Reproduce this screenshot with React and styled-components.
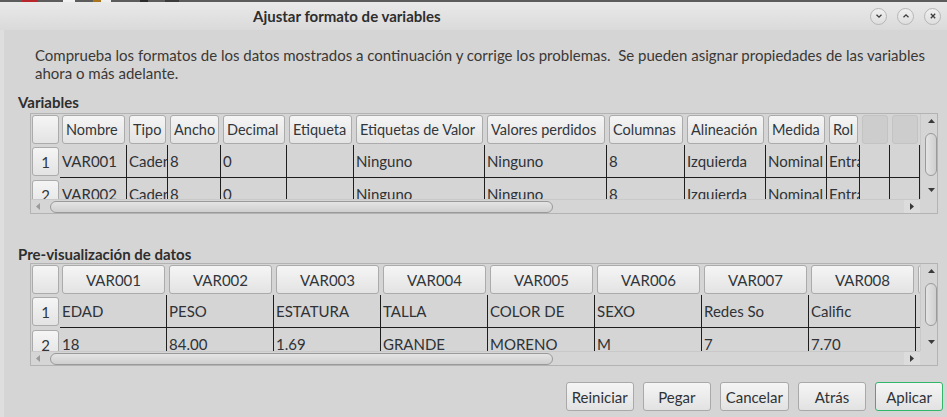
import React from 'react'
import styled, { createGlobalStyle } from 'styled-components'

const GlobalStyle = createGlobalStyle`
  html, body {
    margin: 0;
    padding: 0;
    background: #d5d5d5;
  }
  body {
    width: 947px;
    height: 417px;
    overflow: hidden;
    font-family: Lato, "Noto Sans", sans-serif;
    font-size: 15px;
    color: #3a3a3a;
  }
`

const varCols = [
  { label: 'Nombre', w: 67 },
  { label: 'Tipo', w: 41 },
  { label: 'Ancho', w: 53 },
  { label: 'Decimal', w: 66 },
  { label: 'Etiqueta', w: 67 },
  { label: 'Etiquetas de Valor', w: 131 },
  { label: 'Valores perdidos', w: 122 },
  { label: 'Columnas', w: 78 },
  { label: 'Alineación', w: 81 },
  { label: 'Medida', w: 61 },
  { label: 'Rol', w: 33 },
  { label: '', w: 30, off: true },
  { label: '', w: 30, off: true },
  { label: '', w: 60, off: true },
]

const varRows = [
  ['VAR001', 'Cadena', '8', '0', '', 'Ninguno', 'Ninguno', '8', 'Izquierda', 'Nominal', 'Entrada', '', '', ''],
  ['VAR002', 'Cadena', '8', '0', '', 'Ninguno', 'Ninguno', '8', 'Izquierda', 'Nominal', 'Entrada', '', '', ''],
]

const previewCols = ['VAR001', 'VAR002', 'VAR003', 'VAR004', 'VAR005', 'VAR006', 'VAR007', 'VAR008', 'VAR009'].map(
  (label) => ({ label, w: 107 })
)

const previewRows = [
  ['EDAD', 'PESO', 'ESTATURA', 'TALLA', 'COLOR DE', 'SEXO', 'Redes So', 'Calific', ''],
  ['18', '84.00', '1.69', 'GRANDE', 'MORENO', 'M', '7', '7.70', ''],
]

const Arrow = ({ dir }) => {
  const pts = {
    up: '0,5 3.5,1 7,5',
    down: '0,1 3.5,5 7,1',
    left: '5,0 1,3.5 5,7',
    right: '1,0 5,3.5 1,7',
  }[dir]
  const wide = dir === 'up' || dir === 'down'
  return (
    <svg width={wide ? 7 : 6} height={wide ? 6 : 7} viewBox={wide ? '0 0 7 6' : '0 0 6 7'}>
      <polygon points={pts} fill={dir === 'left' ? '#9a9a9a' : '#3a3a3a'} />
    </svg>
  )
}

const WinIcon = ({ kind }) => (
  <svg width="8" height="8" viewBox="0 0 8 8">
    {kind === 'down' && <polyline points="1.5,2.8 4,5.2 6.5,2.8" fill="none" stroke="#3c3c3c" strokeWidth="1.3" />}
    {kind === 'up' && <polyline points="1.5,5.2 4,2.8 6.5,5.2" fill="none" stroke="#3c3c3c" strokeWidth="1.3" />}
    {kind === 'close' && (
      <path d="M1.8 1.8 L6.2 6.2 M6.2 1.8 L1.8 6.2" stroke="#3c3c3c" strokeWidth="1.3" />
    )}
  </svg>
)

const DataTable = ({ cols, rows, centered, tall }) => (
  <Frame $tall={tall}>
    <Viewport>
      <HeaderRow>
        <RowHead>
          <HeadButton $corner />
        </RowHead>
        {cols.map((c, i) => (
          <HeadCell key={i} $w={c.w}>
            <HeadButton $off={c.off} $centered={centered}>{c.label}</HeadButton>
          </HeadCell>
        ))}
      </HeaderRow>
      {rows.map((r, ri) => (
        <DataRow key={ri}>
          <RowHead>
            <HeadButton $num>{ri + 1}</HeadButton>
          </RowHead>
          {cols.map((c, ci) => (
            <Cell key={ci} $w={c.w}>{r[ci]}</Cell>
          ))}
        </DataRow>
      ))}
    </Viewport>
    <VScroll>
      <Arrow dir="up" />
      <VThumb />
      <Spacer />
      <Arrow dir="down" />
    </VScroll>
    <HScroll>
      <HLeft>
        <Arrow dir="left" />
      </HLeft>
      <HThumb />
      <Spacer />
      <HRight>
        <Arrow dir="right" />
      </HRight>
    </HScroll>
    <Corner />
  </Frame>
)

export default function App() {
  return (
    <Window>
      <GlobalStyle />
      <Desktop>
        <Chip $x={22} $w={16} $c="#b8252a" />
        <Chip $x={63} $w={12} $c="#f2f2f2" />
        <Chip $x={93} $w={8} $c="#a8741c" />
        <Chip $x={101} $w={10} $c="#eeeeee" />
        <Chip $x={140} $w={8} $c="#2b2b2b" />
        <Chip $x={165} $w={14} $c="#3a3a3a" />
      </Desktop>
      <TitleBar>
        <Title>Ajustar formato de variables</Title>
        <Controls>
          <WinButton><WinIcon kind="down" /></WinButton>
          <WinButton><WinIcon kind="up" /></WinButton>
          <WinButton><WinIcon kind="close" /></WinButton>
        </Controls>
      </TitleBar>
      <Body>
        <Intro>
          <span>Comprueba los formatos de los datos mostrados a continuación y corrige los problemas.&nbsp; Se pueden asignar propiedades de las variables</span>
          <span>ahora o más adelante.</span>
        </Intro>
        <SectionLabel $top={11}>Variables</SectionLabel>
        <DataTable cols={varCols} rows={varRows} />
        <SectionLabel $top={31}>Pre-visualización de datos</SectionLabel>
        <DataTable cols={previewCols} rows={previewRows} centered tall />
        <Actions>
          <Button>Reiniciar</Button>
          <Button>Pegar</Button>
          <Button>Cancelar</Button>
          <Button>Atrás</Button>
          <Button $primary>Aplicar</Button>
        </Actions>
      </Body>
    </Window>
  )
}

const Window = styled.div`
  display: flex;
  flex-direction: column;
  width: 947px;
  height: 417px;
  background: #d5d5d5;
`

const Desktop = styled.div`
  position: relative;
  height: 2px;
  background: #5c5c5c;
  flex-shrink: 0;
`

const Chip = styled.span`
  position: absolute;
  top: 0;
  left: ${(p) => p.$x}px;
  width: ${(p) => p.$w}px;
  height: 2px;
  background: ${(p) => p.$c};
`

const TitleBar = styled.div`
  display: flex;
  align-items: center;
  height: 28px;
  flex-shrink: 0;
  background: linear-gradient(#e9e9e9, #dadada);
`

const Title = styled.div`
  margin-left: 253px;
  font-weight: 700;
  font-size: 15px;
  color: #2e2e2e;
`

const Controls = styled.div`
  display: flex;
  gap: 10px;
  margin-left: auto;
  padding-right: 6px;
`

const WinButton = styled.div`
  display: flex;
  align-items: center;
  justify-content: center;
  width: 15px;
  height: 15px;
  border-radius: 50%;
  border: 1px solid #b6b6b6;
  background: linear-gradient(#f0f0f0, #dedede);
`

const Body = styled.div`
  display: flex;
  flex-direction: column;
  flex: 1;
  border-left: 4px solid #dedede;
`

const Intro = styled.p`
  display: flex;
  flex-direction: column;
  margin: 16px 0 0 31px;
  line-height: 18px;
  white-space: nowrap;
  color: #3b3836;
`

const SectionLabel = styled.div`
  margin: ${(p) => p.$top}px 0 0 14px;
  line-height: 18px;
  font-weight: 700;
  color: #2e2e2e;
`

const Frame = styled.div`
  display: grid;
  grid-template-columns: 889px 17px;
  grid-template-rows: ${(p) => (p.$tall ? 87 : 85)}px 14px;
  margin: ${(p) => (p.$tall ? 0 : 2)}px 9px 0 26px;
  border: 1px solid #b3b3b3;
  overflow: hidden;
`

const Viewport = styled.div`
  overflow: hidden;
  position: relative;
`

const HeaderRow = styled.div`
  display: flex;
  align-items: center;
  height: 31px;
  width: max-content;
`

const DataRow = styled.div`
  display: flex;
  align-items: center;
  height: 33px;
  width: max-content;
`

const RowHead = styled.div`
  display: flex;
  align-items: center;
  width: 29px;
  height: 100%;
  padding-left: 1px;
  box-sizing: border-box;
`

const HeadCell = styled.div`
  display: flex;
  align-items: center;
  width: ${(p) => p.$w}px;
  height: 100%;
  padding: 0 2px;
  box-sizing: border-box;
`

const HeadButton = styled.div`
  display: flex;
  align-items: center;
  justify-content: ${(p) => (p.$centered || p.$num ? 'center' : 'flex-start')};
  width: ${(p) => (p.$corner || p.$num ? '27px' : '100%')};
  height: 29px;
  padding: ${(p) => (p.$centered || p.$num ? '0' : '0 0 0 3px')};
  box-sizing: border-box;
  border: 1px solid ${(p) => (p.$off ? '#c3c3c3' : '#ababab')};
  border-radius: 3px;
  background: ${(p) => (p.$off ? '#cdcdcd' : 'linear-gradient(#f5f5f5, #e3e3e3)')};
  color: #31363b;
  font-size: ${(p) => (p.$centered || p.$num ? '15px' : '14.5px')};
  white-space: nowrap;
  overflow: hidden;
`

const Cell = styled.div`
  width: ${(p) => p.$w}px;
  height: 33px;
  line-height: 32px;
  padding-left: 2px;
  box-sizing: border-box;
  border-right: 1px solid #1e1e1e;
  border-bottom: 1px solid #1e1e1e;
  white-space: nowrap;
  overflow: hidden;
  color: #2f3236;
`

const VScroll = styled.div`
  display: flex;
  flex-direction: column;
  align-items: center;
  padding: 4px 0 6px 4px;
  box-sizing: border-box;
  border-left: 1px solid #c9c9c9;
`

const VThumb = styled.div`
  width: 12px;
  height: 43px;
  margin-top: 9px;
  box-sizing: border-box;
  border: 1px solid #9a9a9a;
  border-radius: 6px;
  background: linear-gradient(90deg, #e4e4e4, #cfcfcf);
`

const Spacer = styled.div`
  flex: 1;
`

const HScroll = styled.div`
  display: flex;
  align-items: center;
  border-top: 1px solid #c9c9c9;
`

const HLeft = styled.div`
  display: flex;
  justify-content: center;
  width: 14px;
`

const HThumb = styled.div`
  width: 503px;
  height: 12px;
  margin-left: 5px;
  box-sizing: border-box;
  border: 1px solid #9a9a9a;
  border-radius: 6px;
  background: linear-gradient(#e4e4e4, #cfcfcf);
`

const HRight = styled.div`
  display: flex;
  align-items: center;
  justify-content: center;
  width: 16px;
  height: 100%;
  background: #dcdcdc;
`

const Corner = styled.div`
  background: #d5d5d5;
`

const Actions = styled.div`
  display: flex;
  justify-content: flex-end;
  gap: 9px;
  margin-top: 16px;
  padding-right: 4px;
`

const Button = styled.div`
  display: flex;
  align-items: center;
  justify-content: center;
  min-width: 68px;
  height: 29px;
  padding: 0 5px;
  box-sizing: border-box;
  border: 1px solid ${(p) => (p.$primary ? '#31b66a' : '#a9a9a9')};
  border-radius: 3px;
  background: linear-gradient(#f5f5f5, #e2e2e2);
  color: #2f3236;
  font-size: 15px;
`
